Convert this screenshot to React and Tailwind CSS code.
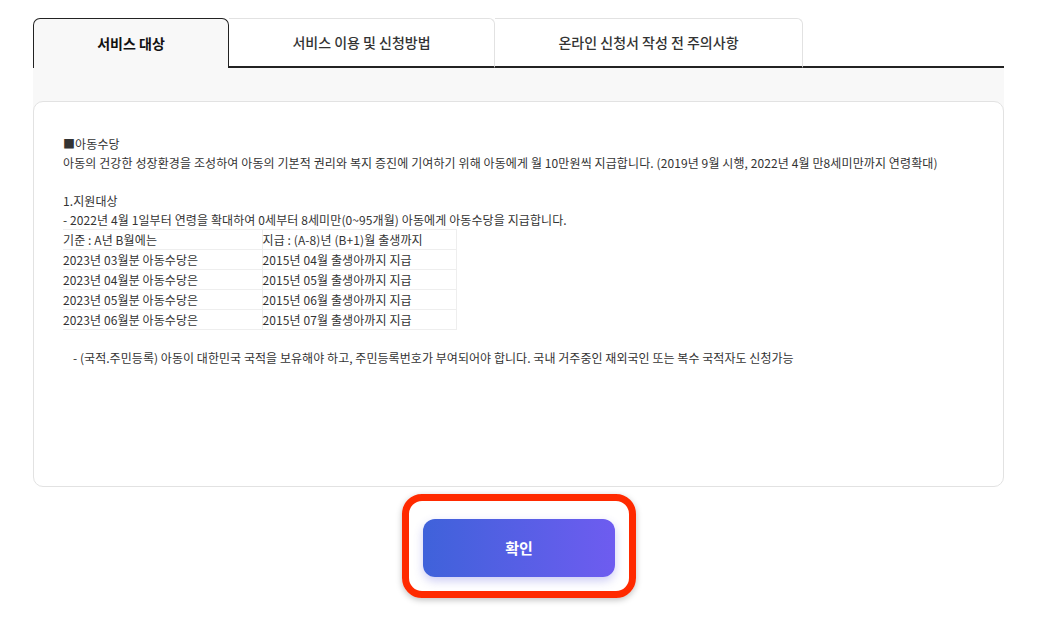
export default function App() {
  const font = { fontFamily: '"Noto Sans CJK KR", "Noto Sans", sans-serif' };
  const rows = [
    ["기준 : A년 B월에는", "지급 : (A-8)년 (B+1)월 출생까지"],
    ["2023년 03월분 아동수당은", "2015년 04월 출생아까지 지급"],
    ["2023년 04월분 아동수당은", "2015년 05월 출생아까지 지급"],
    ["2023년 05월분 아동수당은", "2015년 06월 출생아까지 지급"],
    ["2023년 06월분 아동수당은", "2015년 07월 출생아까지 지급"],
  ];
  return (
    <div className="w-[1058px] h-[624px] bg-white overflow-hidden" style={font}>
      <div className="ml-[33px] w-[971px] pt-[18px]">
        {/* Tabs */}
        <div className="flex h-[50px]">
          <div className="w-[196px] h-[50px] flex items-center justify-center bg-[#f8f8f8] border border-b-0 border-[#222] rounded-t-[7px] text-[14px] font-bold text-[#111]">
            서비스 대상
          </div>
          <div className="w-[266px] h-[50px] flex items-center justify-center bg-white border-t border-r border-[#e2e2e2] border-b-2 border-b-[#222] rounded-tr-[6px] text-[14px] font-medium text-[#333]">
            서비스 이용 및 신청방법
          </div>
          <div className="w-[308px] h-[50px] flex items-center justify-center bg-white border-t border-r border-[#e2e2e2] border-b-2 border-b-[#222] rounded-tr-[6px] text-[14px] font-medium text-[#333]">
            온라인 신청서 작성 전 주의사항
          </div>
          <div className="flex-1 border-b-2 border-[#222]"></div>
        </div>
        {/* Panel */}
        <div className="pt-[33px] bg-[linear-gradient(#f8f8f8_0_45px,#ffffff_45px)]">
          <div className="h-[386px] bg-white border border-[#e2e2e2] rounded-[10px] pl-[29px] pt-[32px] text-[12px] leading-[19px] text-[#333] tracking-[0.1px]">
            <p>■아동수당</p>
            <p>아동의 건강한 성장환경을 조성하여 아동의 기본적 권리와 복지 증진에 기여하기 위해 아동에게 월 10만원씩 지급합니다. (2019년 9월 시행, 2022년 4월 만8세미만까지 연령확대)</p>
            <p>&nbsp;</p>
            <p>1.지원대상</p>
            <p>- 2022년 4월 1일부터 연령을 확대하여 0세부터 8세미만(0~95개월) 아동에게 아동수당을 지급합니다.</p>
            <table className="border-collapse">
              <tbody>
                {rows.map((r, i) => (
                  <tr key={i} className="h-[20px]">
                    <td className="w-[199px] p-0 border border-[#eeeeee] border-l-0 align-middle">{r[0]}</td>
                    <td className="w-[194px] p-0 border border-[#eeeeee] align-middle">{r[1]}</td>
                  </tr>
                ))}
              </tbody>
            </table>
            <p className="mt-[18px] pl-[10px] tracking-[0.05px]">- (국적.주민등록) 아동이 대한민국 국적을 보유해야 하고, 주민등록번호가 부여되어야 합니다. 국내 거주중인 재외국인 또는 복수 국적자도 신청가능</p>
          </div>
        </div>
      </div>
      {/* Button */}
      <div className="flex mt-[7px] pl-[402px]">
        <div className="border-[7px] border-[#ff2a00] rounded-[20px] px-[14px] pt-[18px] pb-[14px] shadow-[0_2px_6px_rgba(0,0,0,0.25)]">
          <button className="w-[192px] h-[58px] rounded-[12px] bg-[linear-gradient(90deg,#3f62da,#6e5cf0)] text-white text-[15px] font-bold shadow-[0_4px_10px_rgba(90,90,220,0.3)]">
            확인
          </button>
        </div>
      </div>
    </div>
  );
}
